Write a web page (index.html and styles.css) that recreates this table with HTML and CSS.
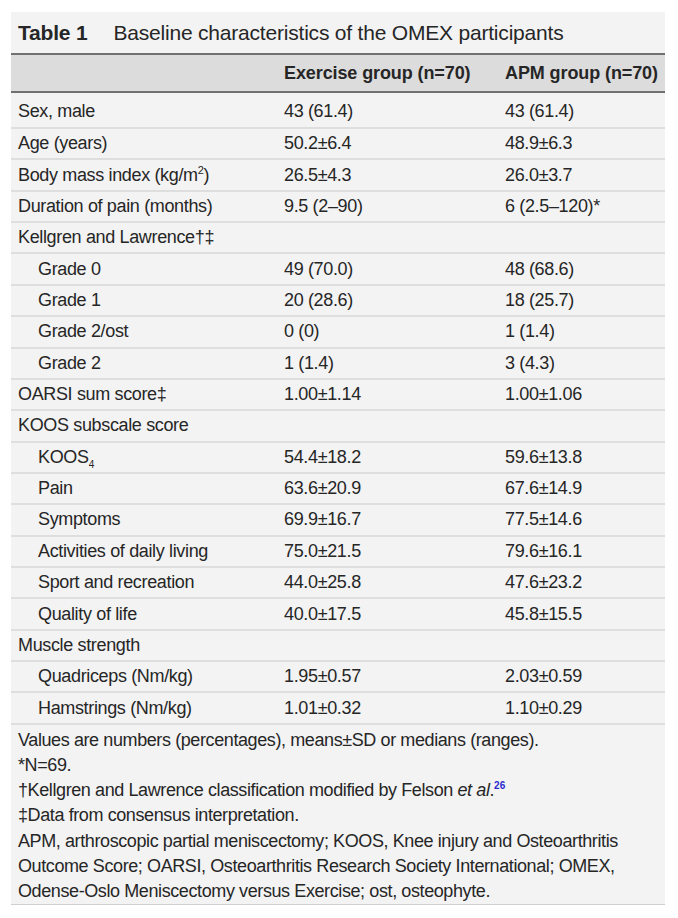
FILE: index.html
```html
<!DOCTYPE html>
<html lang="en">
<head>
    <meta charset="UTF-8">
    <meta name="viewport" content="width=device-width, initial-scale=1.0">
    <title>Table 1 - Baseline characteristics</title>
    <link rel="stylesheet" href="styles.css">
</head>
<body>
    <div class="table-box">
        <div class="caption"><b>Table 1</b><span>Baseline characteristics of the OMEX participants</span></div>
        <table class="data">
            <thead>
                <tr>
                    <th class="c1"></th>
                    <th class="c2">Exercise group (n=70)</th>
                    <th class="c3">APM group (n=70)</th>
                </tr>
            </thead>
            <tbody>
                <tr class="first"><td>Sex, male</td><td>43 (61.4)</td><td>43 (61.4)</td></tr>
                <tr><td>Age (years)</td><td>50.2±6.4</td><td>48.9±6.3</td></tr>
                <tr><td>Body mass index (kg/m<sup>2</sup>)</td><td>26.5±4.3</td><td>26.0±3.7</td></tr>
                <tr><td>Duration of pain (months)</td><td>9.5 (2–90)</td><td>6 (2.5–120)*</td></tr>
                <tr><td>Kellgren and Lawrence†‡</td><td></td><td></td></tr>
                <tr><td class="sub">Grade 0</td><td>49 (70.0)</td><td>48 (68.6)</td></tr>
                <tr><td class="sub">Grade 1</td><td>20 (28.6)</td><td>18 (25.7)</td></tr>
                <tr><td class="sub">Grade 2/ost</td><td>0 (0)</td><td>1 (1.4)</td></tr>
                <tr><td class="sub">Grade 2</td><td>1 (1.4)</td><td>3 (4.3)</td></tr>
                <tr><td>OARSI sum score‡</td><td>1.00±1.14</td><td>1.00±1.06</td></tr>
                <tr><td>KOOS subscale score</td><td></td><td></td></tr>
                <tr><td class="sub">KOOS<sub>4</sub></td><td>54.4±18.2</td><td>59.6±13.8</td></tr>
                <tr><td class="sub">Pain</td><td>63.6±20.9</td><td>67.6±14.9</td></tr>
                <tr><td class="sub">Symptoms</td><td>69.9±16.7</td><td>77.5±14.6</td></tr>
                <tr><td class="sub">Activities of daily living</td><td>75.0±21.5</td><td>79.6±16.1</td></tr>
                <tr><td class="sub">Sport and recreation</td><td>44.0±25.8</td><td>47.6±23.2</td></tr>
                <tr><td class="sub">Quality of life</td><td>40.0±17.5</td><td>45.8±15.5</td></tr>
                <tr><td>Muscle strength</td><td></td><td></td></tr>
                <tr><td class="sub">Quadriceps (Nm/kg)</td><td>1.95±0.57</td><td>2.03±0.59</td></tr>
                <tr><td class="sub">Hamstrings (Nm/kg)</td><td>1.01±0.32</td><td>1.10±0.29</td></tr>
            </tbody>
        </table>
        <div class="notes">
            <p>Values are numbers (percentages), means±SD or medians (ranges).</p>
            <p>*N=69.</p>
            <p>†Kellgren and Lawrence classification modified by Felson <i>et al</i>.<sup class="ref">26</sup></p>
            <p>‡Data from consensus interpretation.</p>
            <p>APM, arthroscopic partial meniscectomy; KOOS, Knee injury and Osteoarthritis<br>Outcome Score; OARSI, Osteoarthritis Research Society International; OMEX,<br>Odense-Oslo Meniscectomy versus Exercise; ost, osteophyte.</p>
        </div>
    </div>
</body>
</html>
```

FILE: styles.css
```css
body {
    margin: 0;
    background-color: #fff;
    font-family: "Liberation Sans", Arial, sans-serif;
    color: #262626;
}
.table-box {
    margin: 12px 0 0 11px;
    width: 654px;
    background-color: #f3f3f3;
    border-bottom: 1px solid #d0d0d0;
}
.caption {
    height: 41px;
    display: flex;
    align-items: center;
    padding-left: 7px;
    font-size: 21px;
    letter-spacing: -0.2px;
    box-sizing: border-box;
}
.caption b {
    margin-right: 26px;
}
.data {
    width: 100%;
    border-collapse: collapse;
    font-size: 18px;
    letter-spacing: -0.35px;
}
.data thead th {
    background-color: #dcdcdc;
    border-top: 2px solid #707070;
    border-bottom: 2px solid #707070;
    height: 38px;
    padding: 0 0 0 7px;
    text-align: left;
    font-weight: bold;
    letter-spacing: -0.1px;
    box-sizing: border-box;
}
.data .c1 { width: 266px; }
.data .c2 { width: 221px; }
.data td {
    height: 31.37px;
    padding: 0 0 0 7px;
    border-bottom: 2px solid #dedede;
    box-sizing: border-box;
    white-space: nowrap;
}
.data tr.first td {
    height: 36px;
    padding-top: 3px;
}
.data td.sub {
    padding-left: 27px;
}
.data sup {
    font-size: 11px;
    vertical-align: 7px;
    line-height: 0;
}
.data sub {
    font-size: 10px;
    vertical-align: -5px;
    line-height: 0;
}
.notes {
    padding: 3px 0 0 7px;
    font-size: 18px;
    letter-spacing: -0.4px;
    line-height: 25.2px;
}
.notes p {
    margin: 0;
}
.notes .ref {
    color: #2a2ad0;
    font-weight: bold;
    font-size: 10px;
    letter-spacing: 0;
    vertical-align: 7px;
    line-height: 0;
}
```
